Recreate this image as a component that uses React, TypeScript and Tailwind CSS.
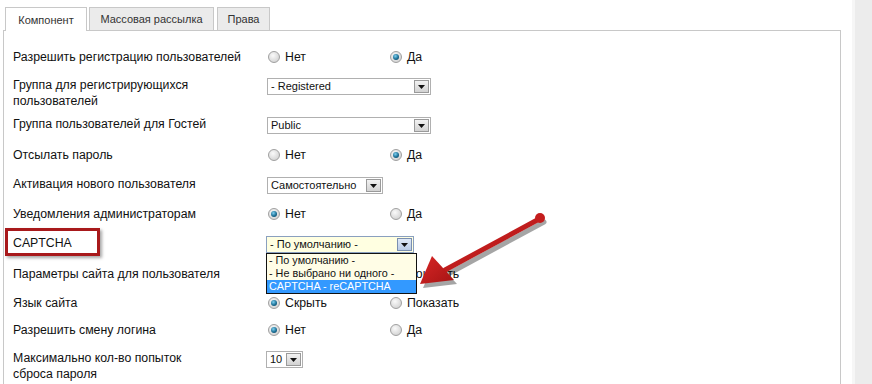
import React from "react";

const font = { fontFamily: '"Liberation Sans", Arial, sans-serif' };

function Radio({ checked }: { checked?: boolean }) {
  return (
    <span className="inline-flex h-[12px] w-[12px] shrink-0 items-center justify-center rounded-full border border-[#a0a0a0] bg-[radial-gradient(circle_at_40%_35%,#fafafa,#c9c9c9)]">
      {checked && (
        <span className="h-[6px] w-[6px] rounded-full bg-[radial-gradient(circle_at_40%_35%,#7fd0f0,#1b6f95_55%,#0a3b55)]" />
      )}
    </span>
  );
}

function RadioPair({ a, b, checked, hideFirst }: { a: string; b: string; checked: 0 | 1; hideFirst?: boolean }) {
  return (
    <div className="flex h-[16px] items-center">
      <div className={"flex w-[122px] items-center gap-[5px] pl-[1px] " + (hideFirst ? "invisible" : "")}>
        <Radio checked={checked === 0} />
        <span className="text-[12.3px] text-[#111]">{a}</span>
      </div>
      <div className="flex items-center gap-[5px] pl-[1px]">
        <Radio checked={checked === 1} />
        <span className="text-[12.3px] text-[#111]">{b}</span>
      </div>
    </div>
  );
}

function ArrowBtn({ blue }: { blue?: boolean }) {
  return (
    <span
      className={
        "flex h-[13px] w-[15px] items-end justify-center border pb-[3px] " +
        (blue
          ? "border-[#7a8fb0] bg-[linear-gradient(#dfe9f7,#b9cbe6)]"
          : "border-[#9a9a9a] bg-[linear-gradient(#f2f2f2,#d2d2d2)]")
      }
    >
      <svg width="7" height="4" viewBox="0 0 7 4">
        <path d="M0 0H7L3.5 4Z" fill="#111" />
      </svg>
    </span>
  );
}

function Select({ w, text, yellow }: { w: number; text: string; yellow?: boolean }) {
  return (
    <div
      className={
        "mt-[1px] flex h-[17px] items-center justify-between border pl-[3px] pr-[1px] " +
        (yellow ? "border-[#8aa0bf] bg-[#ffffe1]" : "border-[#b0b0b0] bg-white")
      }
      style={{ width: w }}
    >
      <span className="text-[11px] leading-none text-[#111]">{text}</span>
      <ArrowBtn blue={yellow} />
    </div>
  );
}

function Row({ h, label, children }: { h: number; label: React.ReactNode; children?: React.ReactNode }) {
  return (
    <div className="flex items-start" style={{ height: h }}>
      <div className="w-[254px] pl-[9px] text-[12.3px] leading-[16px] text-[#111]">{label}</div>
      <div className="pl-[9px]">{children}</div>
    </div>
  );
}

export default function App() {
  return (
    <div className="relative h-[384px] w-[872px] overflow-hidden bg-white" style={font}>
      <div className="flex h-full">
        <div className="flex w-[852px] flex-col pl-[3px] pt-[7px]">
          {/* tabs */}
          <div className="flex h-[24px] items-end">
            <div className="relative z-10 ml-[2px] flex h-[24px] w-[82px] items-center justify-center border border-b-0 border-[#c8c8c8] bg-white pt-[1px] text-[11px] text-[#333]">
              Компонент
            </div>
            <div className="ml-[2px] flex h-[24px] w-[125px] items-center justify-center border border-b-0 border-[#c8c8c8] bg-[#ebebeb] text-[11px] text-[#333]">
              Массовая рассылка
            </div>
            <div className="ml-[3px] flex h-[24px] w-[53px] items-center justify-center border border-b-0 border-[#c8c8c8] bg-[#ebebeb] text-[11px] text-[#333]">
              Права
            </div>
          </div>
          {/* panel */}
          <div className="-mt-[1px] flex w-[838px] flex-1 flex-col border border-b-0 border-[#c8c8c8] pt-[18px]">
            <Row h={28} label="Разрешить регистрацию пользователей">
              <RadioPair a="Нет" b="Да" checked={1} />
            </Row>
            <Row
              h={39}
              label={
                <>
                  Группа для регистрирующихся
                  <br />
                  пользователей
                </>
              }
            >
              <Select w={164} text="- Registered" />
            </Row>
            <Row h={31} label="Группа пользователей для Гостей">
              <Select w={164} text="Public" />
            </Row>
            <Row h={29} label="Отсылать пароль">
              <RadioPair a="Нет" b="Да" checked={1} />
            </Row>
            <Row h={30} label="Активация нового пользователя">
              <Select w={116} text="Самостоятельно" />
            </Row>
            <Row h={29} label="Уведомления администраторам">
              <RadioPair a="Нет" b="Да" checked={0} />
            </Row>
            <Row
              h={31}
              label={
                <div className="relative">
                  CAPTCHA
                  <div className="absolute left-[-8px] top-[-7px] h-[28px] w-[95px] border-[3px] border-[#a8191b] shadow-[2px_2px_3px_rgba(0,0,0,0.35)]" />
                </div>
              }
            >
              <div className="relative -ml-[1px]">
                <Select w={148} text="- По умолчанию -" yellow />
                <div className="absolute left-0 top-[17px] z-20 flex w-[151px] flex-col border border-[#111] bg-[#fffde6] text-[10.8px] leading-[13px] text-[#111]">
                  <div className="px-[2px]">- По умолчанию -</div>
                  <div className="px-[2px]">- Не выбрано ни одного -</div>
                  <div className="bg-[#3399ff] px-[2px] text-white">CAPTCHA - reCAPTCHA</div>
                </div>
              </div>
            </Row>
            <Row h={29} label="Параметры сайта для пользователя">
              <RadioPair a="Скрыть" b="Показать" checked={0} hideFirst />
            </Row>
            <Row h={27} label="Язык сайта">
              <RadioPair a="Скрыть" b="Показать" checked={0} />
            </Row>
            <Row h={28} label="Разрешить смену логина">
              <RadioPair a="Нет" b="Да" checked={0} />
            </Row>
            <Row
              h={40}
              label={
                <>
                  Максимально кол-во попыток
                  <br />
                  сброса пароля
                </>
              }
            >
              <div className="-ml-[1px]">
                <Select w={37} text="10" />
              </div>
            </Row>
          </div>
        </div>
        {/* right scrollbar strip */}
        <div className="flex h-full flex-1">
          <div className="w-[3px] bg-[#f6f6f6]" />
          <div className="flex-1 bg-[#ececec]" />
        </div>
      </div>
      {/* red arrow annotation */}
      <svg className="pointer-events-none absolute left-0 top-0 z-30" width="872" height="384">
        <defs>
          <linearGradient id="rg" x1="0" y1="0" x2="1" y2="1">
            <stop offset="0" stopColor="#d92626" />
            <stop offset="1" stopColor="#a51414" />
          </linearGradient>
        </defs>
        <g opacity="0.35" transform="translate(3,4)">
          <line x1="541" y1="218" x2="445" y2="270" stroke="#000" strokeWidth="5" strokeLinecap="round" />
          <path d="M420 284 L432 256 L454 280 Z" fill="#000" />
        </g>
        <line x1="541" y1="218" x2="445" y2="270" stroke="url(#rg)" strokeWidth="5" strokeLinecap="round" />
        <path d="M420 284 L432 256 L454 280 Z" fill="url(#rg)" />
        <circle cx="540" cy="218" r="5" fill="#c41d1d" />
      </svg>
    </div>
  );
}
